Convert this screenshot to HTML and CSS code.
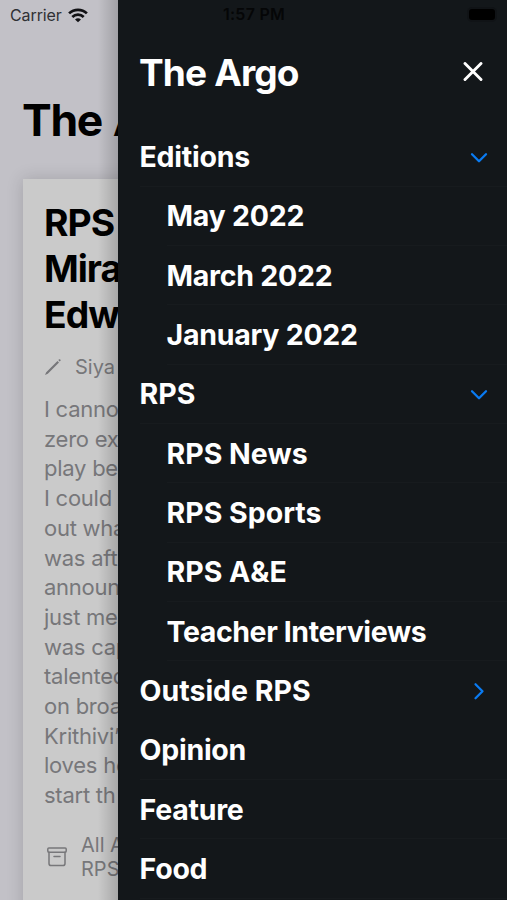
FILE: index.html
```html
<!DOCTYPE html>
<html lang="en">
<head>
<meta charset="utf-8">
<title>The Argo</title>
<link rel="stylesheet" href="styles.css">
</head>
<body>
<main class="feed">
  <div class="carrier"><span>Carrier</span>
    <svg width="20" height="15" viewBox="0 0 20 15" fill="none" stroke="#111114" stroke-width="2.7"><path d="M1.1 5.4a12.8 12.8 0 0 1 17.8 0M4.3 9a8.2 8.2 0 0 1 11.4 0"/><path d="M10 14.3 7 11.6a4.3 4.3 0 0 1 6 0z" fill="#111114" stroke="none"/></svg>
  </div>
  <h1 class="feed-title">The A</h1>
  <article class="card">
    <h2 class="headline">RPS<br>Mira<br>Edw</h2>
    <div class="author">
      <svg width="18" height="18" viewBox="0 0 18 18" fill="#77777a"><path d="m1 17 1.2-2.8L13.5 2.9l1.5 1.5L3.8 15.8zM14.3 2.1l.9-.8q.5-.3 1 .1l.3.3q.4.5 0 1l-.8.9z"/></svg>
      <span>Siya</span>
    </div>
    <p class="excerpt">I canno<br>zero ex<br>play be<br>I could<br>out wha<br>was aft<br>announ<br>just me<br>was cap<br>talented<br>on broa<br>Krithivi’<br>loves he<br>start th</p>
    <div class="category">
      <svg width="20" height="20" viewBox="0 0 20 20" fill="none" stroke="#77777a" stroke-width="1.5" stroke-linecap="round"><rect x=".8" y="1" width="18.4" height="4.2" rx="1.1"/><path d="M2 5.2v11.2q0 2.2 2.2 2.2h11.6q2.2 0 2.2-2.2V5.2M7 9.4h6"/></svg>
      <span>All A<br>RPS</span>
    </div>
  </article>
</main>
<aside class="drawer">
  <div class="status"><span class="time">1:57 PM</span><span class="battery"></span></div>
  <header class="drawer-head">
    <h2 class="drawer-title">The Argo</h2>
    <svg class="close" width="20" height="20" viewBox="0 0 20 20" fill="none" stroke="#fff" stroke-width="2.9" stroke-linecap="round"><path d="m2 1.5 16 16M18 1.5l-16 16"/></svg>
  </header>
  <nav class="menu">
    <div class="row"><span>Editions</span><svg class="chev" width="18" height="18" viewBox="0 0 18 18"><path d="m2 6.3 7 7 7-7"/></svg></div>
    <div class="row sub"><span>May 2022</span></div>
    <div class="row sub"><span>March 2022</span></div>
    <div class="row sub"><span>January 2022</span></div>
    <div class="row wide"><span>RPS</span><svg class="chev" width="18" height="18" viewBox="0 0 18 18"><path d="m2 6.3 7 7 7-7"/></svg></div>
    <div class="row sub wide"><span>RPS News</span></div>
    <div class="row sub wide"><span>RPS Sports</span></div>
    <div class="row sub wide"><span>RPS A&amp;E</span></div>
    <div class="row sub tight"><span>Teacher Interviews</span></div>
    <div class="row plain wide"><span>Outside RPS</span><svg class="chev" width="18" height="18" viewBox="0 0 18 18"><path d="m5.5 2.3 7 7-7 7"/></svg></div>
    <div class="row"><span>Opinion</span></div>
    <div class="row"><span>Feature</span></div>
    <div class="row"><span>Food</span></div>
  </nav>
</aside>
</body>
</html>
```
FILE: styles.css
```css
* { box-sizing: border-box; }
body {
  margin: 0;
  height: 900px;
  overflow: hidden;
  position: relative;
  background: #c2c1c7;
  font-family: Inter, "Liberation Sans", sans-serif;
}
h1, h2, p { margin: 0; }
svg { display: block; flex: none; }
.feed { width: 118px; height: 900px; overflow: hidden; white-space: nowrap; }
.carrier {
  display: flex;
  align-items: center;
  gap: 6px;
  height: 30px;
  padding-left: 10px;
  color: #303034;
  font-size: 16px;
  letter-spacing: -0.1px;
}
.feed-title {
  height: 149px;
  padding: 62px 0 0 22px;
  font-size: 44.5px;
  line-height: 56px;
  font-weight: 700;
  letter-spacing: -1.3px;
  word-spacing: 1.5px;
}
.card {
  margin-left: 23px;
  width: 400px;
  height: 760px;
  padding: 21px 0 0 21px;
  background: #cacaca;
  box-shadow: 0 0 16px rgba(0, 0, 0, 0.16);
  color: #77777a;
}
.headline {
  margin-bottom: 1px;
  color: #000;
  font-size: 37.3px;
  line-height: 46px;
  font-weight: 700;
  letter-spacing: -1px;
}
.author {
  display: flex;
  align-items: center;
  gap: 13px;
  height: 56px;
  font-size: 20px;
}
.excerpt {
  font-size: 22px;
  line-height: 29.7px;
  letter-spacing: -0.25px;
}
.category {
  display: flex;
  align-items: center;
  gap: 14px;
  padding: 22px 0 0 3px;
  font-size: 20px;
  line-height: 24px;
}
.drawer {
  position: absolute;
  top: 0;
  right: 0;
  width: 389px;
  height: 900px;
  overflow: hidden;
  background: #13171a;
  color: #fff;
}
.feed::after {
  content: "";
  position: absolute;
  top: 0;
  left: 98px;
  width: 20px;
  height: 900px;
  background: linear-gradient(to right, rgba(0, 0, 0, 0), rgba(0, 0, 0, 0.17));
}
.status {
  display: flex;
  align-items: center;
  justify-content: space-between;
  height: 30px;
  padding: 0 12px 2px 105px;
}
.time { color: #050607; font-size: 16px; font-weight: 600; letter-spacing: 0.25px; }
.battery {
  width: 26px;
  height: 11px;
  border-radius: 3px;
  background: #000;
  box-shadow: 0 0 0 2px #101316;
}
.drawer-head {
  display: flex;
  align-items: center;
  justify-content: space-between;
  height: 97.4px;
  padding: 0 24px 13px 21px;
}
.drawer-title { font-size: 37px; font-weight: 700; letter-spacing: -0.85px; }
.menu { padding-left: 22px; }
.row {
  display: flex;
  align-items: center;
  justify-content: space-between;
  height: 59.33px;
  padding-right: 19px;
  border-bottom: 1px solid #171b1e;
  font-size: 28.5px;
  font-weight: 700;
  letter-spacing: -0.25px;
}
.row span { margin-left: -0.5px; }
.sub { margin-left: 27px; }
.wide { letter-spacing: 0; }
.tight { letter-spacing: -0.4px; }
.plain { border-color: transparent; }
.chev {
  fill: none;
  stroke: #0a7bf2;
  stroke-width: 2.3;
  stroke-linecap: round;
  stroke-linejoin: round;
}
```
